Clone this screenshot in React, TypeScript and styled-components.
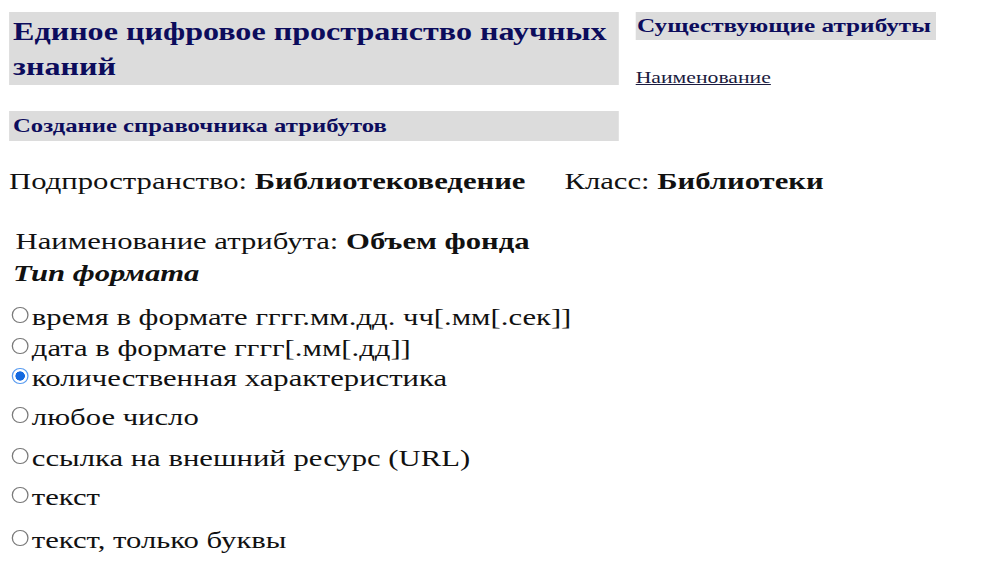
import React from "react";
import styled, { createGlobalStyle } from "styled-components";

const Global = createGlobalStyle`
  html, body { margin: 0; padding: 0; background: #ffffff; }
  body {
    font-family: "Liberation Serif", "Times New Roman", serif;
    color: #111111;
    overflow: hidden;
  }
`;

/* The reference is a horizontally stretched capture: the page is laid out
   in flow and widened as a whole. */
const Page = styled.div`
  width: 763px;
  box-sizing: border-box;
  padding: 12px 0 0 7px;
  transform: scaleX(1.3);
  transform-origin: 0 0;
`;

const Top = styled.div`
  display: flex;
  align-items: flex-start;
  gap: 13px;
`;

const LeftCol = styled.div`
  width: 469px;
  display: flex;
  flex-direction: column;
  gap: 26px;
`;

const RightCol = styled.div`
  display: flex;
  flex-direction: column;
  align-items: flex-start;
`;

const Banner = styled.div<{ $size: number; $lh: number; $pad: string }>`
  background: #dcdcdc;
  color: #0c0c5c;
  font-weight: bold;
  font-size: ${(p) => p.$size}px;
  line-height: ${(p) => p.$lh}px;
  padding: ${(p) => p.$pad};
`;

const SideBanner = styled(Banner)`
  width: 231px;
  box-sizing: border-box;
`;

const AttrLink = styled.a`
  margin-top: 29px;
  font-size: 16.7px;
  line-height: 18px;
  color: #1b1b40;
  text-decoration: underline;
`;

const Body = styled.div`
  display: flex;
  flex-direction: column;
  margin-top: 26px;
  font-size: 23.6px;
`;

const InfoLine = styled.div<{ $indent: number; $lh: number; $gap?: number }>`
  padding-left: ${(p) => p.$indent}px;
  line-height: ${(p) => p.$lh}px;
  margin-top: ${(p) => p.$gap ?? 0}px;
  white-space: nowrap;
`;

const Value = styled.b`
  font-weight: bold;
`;

const Spacer = styled.span`
  display: inline-block;
  width: 30px;
`;

const FormatTitle = styled.div`
  padding-left: 3px;
  line-height: 32px;
  font-weight: bold;
  font-style: italic;
`;

const Options = styled.div`
  display: flex;
  flex-direction: column;
  margin-top: 13px;
`;

const Option = styled.label<{ $gap: number }>`
  display: block;
  padding-left: 2px;
  line-height: 30px;
  margin-top: ${(p) => p.$gap}px;
  white-space: nowrap;
`;

const Radio = styled.input.attrs({ type: "radio" })`
  appearance: none;
  -webkit-appearance: none;
  display: inline-block;
  box-sizing: border-box;
  width: 12.5px;
  min-width: 12.5px;
  height: 16px;
  min-height: 16px;
  margin: 0 3px 2px 0;
  padding: 0;
  border: 1.2px solid #7a7a7a;
  border-radius: 50%;
  background: #ffffff;
  vertical-align: baseline;

  &:checked {
    border-color: #5a9cf0;
    background: radial-gradient(
      ellipse closest-side,
      #1469e0 0%,
      #1469e0 62%,
      #ffffff 70%,
      #ffffff 100%
    );
  }
`;

const options: { label: string; gap: number; checked?: boolean }[] = [
  { label: "время в формате гггг.мм.дд. чч[.мм[.сек]]", gap: 0 },
  { label: "дата в формате гггг[.мм[.дд]]", gap: 1 },
  { label: "количественная характеристика", gap: 0, checked: true },
  { label: "любое число", gap: 9 },
  { label: "ссылка на внешний ресурс (URL)", gap: 11 },
  { label: "текст", gap: 9 },
  { label: "текст, только буквы", gap: 13 },
];

export default function App() {
  return (
    <>
      <Global />
      <Page>
        <Top>
          <LeftCol>
            <Banner $size={24.7} $lh={35} $pad="2px 3px 1px">
              Единое цифровое пространство научных знаний
            </Banner>
            <Banner $size={19} $lh={30} $pad="0 3px">
              Создание справочника атрибутов
            </Banner>
          </LeftCol>
          <RightCol>
            <SideBanner $size={19.4} $lh={28} $pad="0 1px">
              Существующие атрибуты
            </SideBanner>
            <AttrLink href="#">Наименование</AttrLink>
          </RightCol>
        </Top>
        <Body>
          <InfoLine $indent={0} $lh={28}>
            Подпространство: <Value>Библиотековедение</Value>
            <Spacer />
            Класс: <Value>Библиотеки</Value>
          </InfoLine>
          <InfoLine $indent={5} $lh={32} $gap={30}>
            Наименование атрибута: <Value>Объем фонда</Value>
          </InfoLine>
          <FormatTitle>Тип формата</FormatTitle>
          <Options>
            {options.map((o) => (
              <Option key={o.label} $gap={o.gap}>
                <Radio name="format" defaultChecked={o.checked} />
                {o.label}
              </Option>
            ))}
          </Options>
        </Body>
      </Page>
    </>
  );
}
